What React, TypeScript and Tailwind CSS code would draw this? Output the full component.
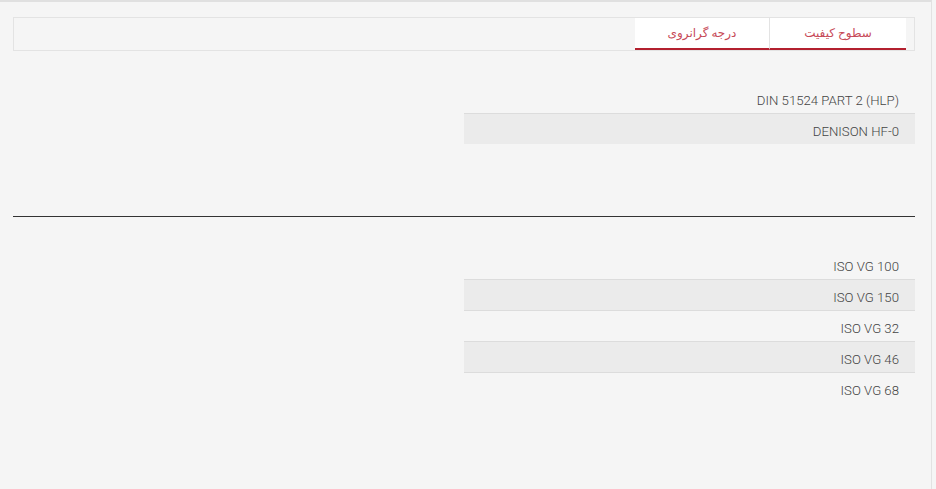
const qualityLevels = ["DIN 51524 PART 2 (HLP)", "DENISON HF-0"];
const viscosityGrades = ["ISO VG 100", "ISO VG 150", "ISO VG 32", "ISO VG 46", "ISO VG 68"];

const SpecList = ({ items }: { items: string[] }) => (
  <div className="flex">
    <div className="w-1/2">
      {items.map((item, i) => (
        <div
          key={item}
          className={`box-content h-[25px] pr-4 pt-[5px] flex items-center text-[13.2px] font-light text-[#444] ${
            i % 2 === 1 ? "bg-[#ebebeb]" : ""
          } ${i < items.length - 1 ? "border-b border-[#dcdcdc]" : ""}`}
        >
          <span dir="ltr">{item}</span>
        </div>
      ))}
    </div>
  </div>
);

export default function App() {
  return (
    <div className="w-[936px] h-[489px] bg-[#f5f5f5] overflow-hidden" style={{ fontFamily: "Roboto, 'DejaVu Sans', sans-serif" }}>
      <div className="w-[932px] h-full border-r border-[#e2e2e2] border-t-2 border-t-[#e0e0e0] pt-[15px] pl-[13px] pr-[16px]" dir="rtl">
        {/* tabs */}
        <div className="h-[34px] border border-[#e3e3e3] flex pr-2">
          <button className="w-[137px] h-[32px] bg-white border-b-2 border-[#b3202f] border-l border-l-[#e3e3e3] text-[12px] text-[#c74a58]">
            سطوح کیفیت
          </button>
          <button className="w-[134px] h-[32px] bg-white border-b-2 border-[#b3202f] text-[12px] text-[#c74a58]">
            درجه گرانروی
          </button>
        </div>

        <div className="mt-[32px]">
          <SpecList items={qualityLevels} />
        </div>

        <div className="mt-[72px] border-t border-[#333]" />

        <div className="mt-[32px]">
          <SpecList items={viscosityGrades} />
        </div>
      </div>
    </div>
  );
}
